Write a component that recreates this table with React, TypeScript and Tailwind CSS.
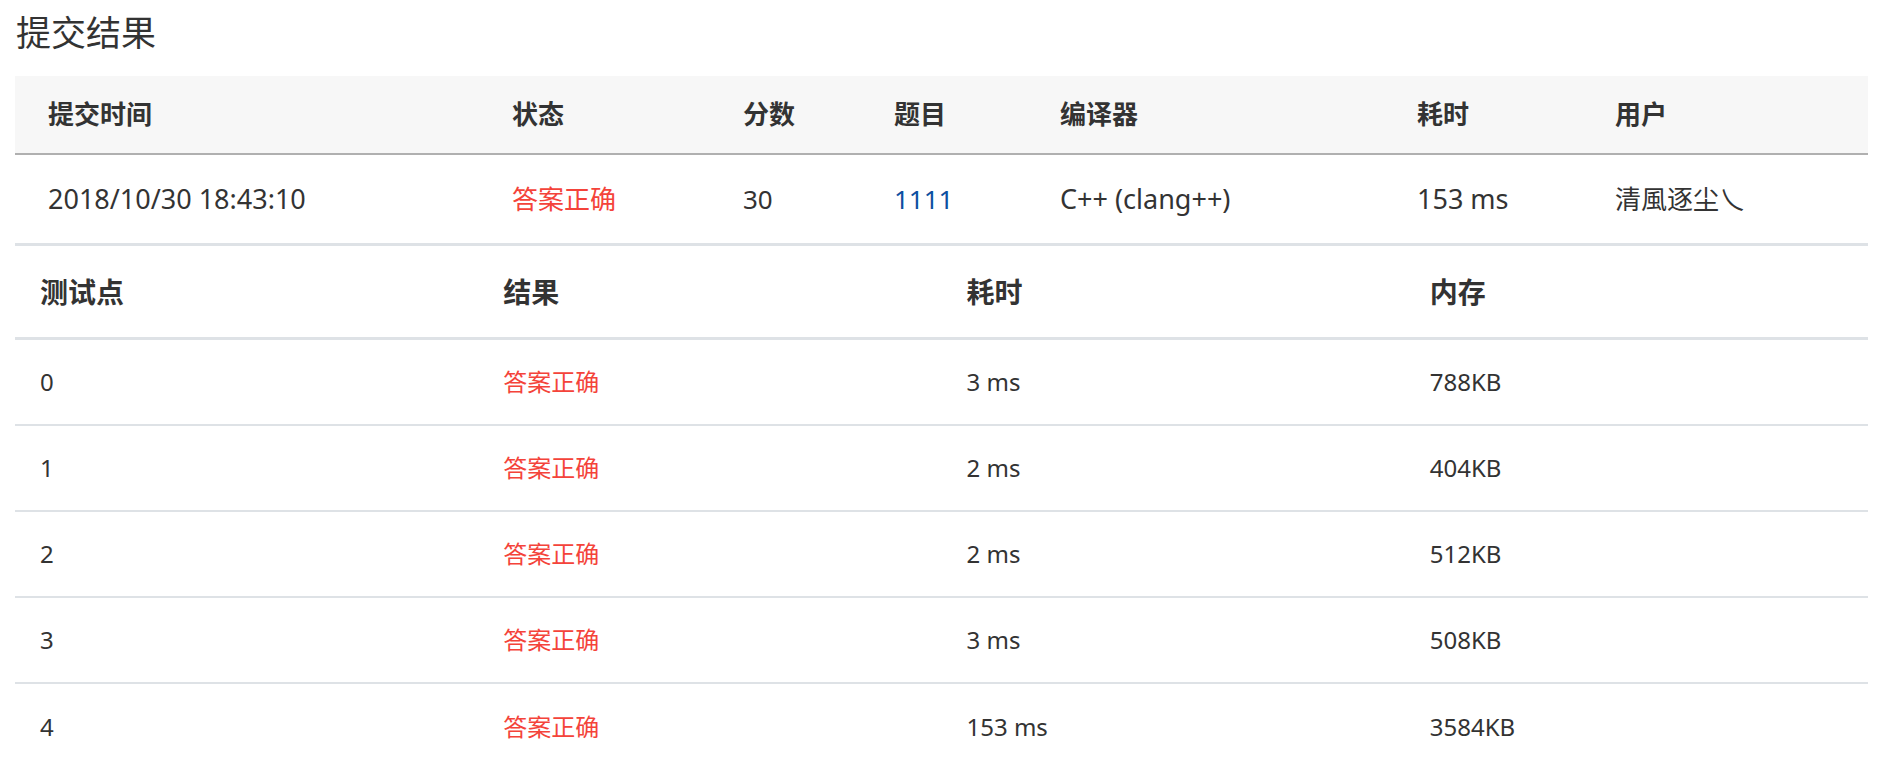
const font = { fontFamily: '"Noto Sans", "Noto Sans CJK SC", sans-serif' };

const summaryCols = [
  { label: "提交时间", w: "w-[497px] pl-[33px]" },
  { label: "状态", w: "w-[231px]" },
  { label: "分数", w: "w-[151px]" },
  { label: "题目", w: "w-[166px]" },
  { label: "编译器", w: "w-[357px]" },
  { label: "耗时", w: "w-[198px]" },
  { label: "用户", w: "flex-1" },
];

const cases = [
  { id: "0", time: "3 ms", mem: "788KB" },
  { id: "1", time: "2 ms", mem: "404KB" },
  { id: "2", time: "2 ms", mem: "512KB" },
  { id: "3", time: "3 ms", mem: "508KB" },
  { id: "4", time: "153 ms", mem: "3584KB" },
];

export default function App() {
  return (
    <div className="min-h-screen bg-white text-[#333]" style={font}>
      <h1 className="h-[76px] pl-4 text-[35px] font-normal leading-[66px]">提交结果</h1>

      <div className="ml-[15px] mr-[12px]">
        {/* Summary */}
        <div className="flex h-[79px] items-center border-b-2 border-[#b0b0b0] bg-[#f7f7f7] text-[26px] font-bold">
          {summaryCols.map((c) => (
            <div key={c.label} className={c.w}>
              {c.label}
            </div>
          ))}
        </div>
        <div className="flex h-[91px] items-center border-b-[3px] border-[#dee2e6] text-[26px]">
          <div className="w-[497px] pl-[33px] text-[27px]">2018/10/30 18:43:10</div>
          <div className="w-[231px] text-[#f4433a]">答案正确</div>
          <div className="w-[151px]">30</div>
          <div className="w-[166px] text-[#0d4fa0]">1111</div>
          <div className="w-[357px] text-[27px]">C++ (clang++)</div>
          <div className="w-[198px] text-[27px]">153 ms</div>
          <div className="flex-1">清風逐尘乀</div>
        </div>

        {/* Test cases */}
        <div className="grid h-[94px] grid-cols-4 items-center border-b-[3px] border-[#dee2e6] text-[28px] font-bold">
          <div className="pl-[25px]">测试点</div>
          <div className="pl-[25px]">结果</div>
          <div className="pl-[25px]">耗时</div>
          <div className="pl-[25px]">内存</div>
        </div>
        {cases.map((c, i) => (
          <div
            key={c.id}
            className={`grid h-[86px] grid-cols-4 items-center text-[24px] ${
              i < cases.length - 1 ? "border-b-2 border-[#dee2e6]" : ""
            }`}
          >
            <div className="pl-[25px]">{c.id}</div>
            <div className="pl-[25px] text-[#f4433a]">答案正确</div>
            <div className="pl-[25px]">{c.time}</div>
            <div className="pl-[25px]">{c.mem}</div>
          </div>
        ))}
      </div>
    </div>
  );
}
